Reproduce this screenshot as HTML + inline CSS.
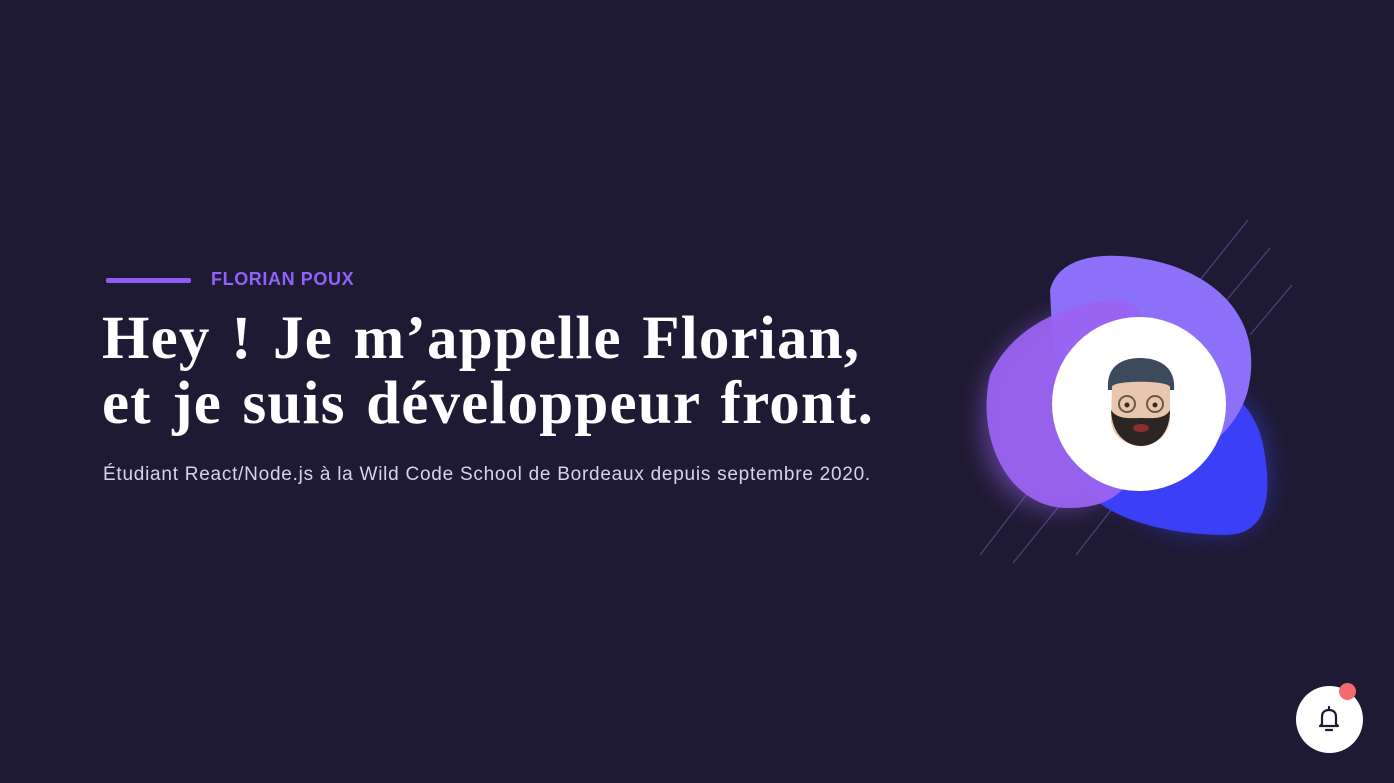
<!DOCTYPE html>
<html><head><meta charset="utf-8"><style>
html,body{margin:0;padding:0}
body{width:1394px;height:783px;background:#1f1a33;position:relative;overflow:hidden;font-family:"Liberation Sans",sans-serif}
.bar{position:absolute;left:106px;top:278px;width:85px;height:5px;background:#8f5cf7;border-radius:2px}
.name{position:absolute;left:211px;top:269px;font-size:18px;font-weight:bold;color:#9062f7;letter-spacing:0.6px}
h1{position:absolute;left:102px;top:306px;margin:0;font-family:"Liberation Serif",serif;font-weight:bold;font-size:61px;line-height:65px;color:#fff;letter-spacing:1.2px;word-spacing:4px}
.sub{position:absolute;left:103px;top:464px;font-size:19px;color:#d8d2f0;letter-spacing:0.75px}
.bell{position:absolute;left:1296px;top:686px;width:67px;height:67px;border-radius:50%;background:#fff}
.dot{position:absolute;left:1339px;top:683px;width:17px;height:17px;border-radius:50%;background:#f06a6f}
</style></head><body>
<div class="bar"></div>
<div class="name">FLORIAN POUX</div>
<h1>Hey ! Je m’appelle Florian,<br>et je suis développeur front.</h1>
<div class="sub">Étudiant React/Node.js à la Wild Code School de Bordeaux depuis septembre 2020.</div>
<svg style="position:absolute;left:0;top:0" width="1394" height="783">
<defs><filter id="g" x="-30%" y="-30%" width="160%" height="160%"><feGaussianBlur stdDeviation="12"/></filter></defs>
<g stroke="#4a4480" stroke-width="1.2">
<line x1="1200" y1="280" x2="1248" y2="220"/>
<line x1="1225" y1="302" x2="1270" y2="248"/>
<line x1="1250" y1="335" x2="1292" y2="285"/>
<line x1="980" y1="555" x2="1030" y2="490"/>
<line x1="1013" y1="563" x2="1060" y2="505"/>
<line x1="1076" y1="555" x2="1115" y2="505"/>
</g>
<g filter="url(#g)" opacity="0.5">
<path d="M1100 400 C1200 370 1265 380 1268 470 C1270 530 1240 540 1180 530 C1120 520 1080 470 1100 400Z" fill="#3b3ff5"/>
<path d="M990 380 C1020 310 1120 290 1145 330 C1170 390 1140 500 1070 508 C990 515 970 440 990 380Z" fill="#9a63f0"/>
</g>
<path d="M1090 400 C1150 370 1240 360 1262 440 C1275 500 1265 535 1225 535 C1170 535 1110 520 1085 490 C1065 460 1070 420 1090 400Z" fill="#3b3ff5"/>
<path d="M1050 290 C1060 250 1120 250 1170 265 C1230 285 1262 330 1248 390 C1235 440 1180 470 1130 480 C1080 490 1055 420 1050 290Z" fill="#8c70fa"/>
<path d="M990 375 C1015 320 1080 300 1120 300 C1160 305 1150 380 1145 430 C1140 490 1110 508 1070 508 C1010 510 975 440 990 375Z" fill="#9a63f0" opacity="0.95"/>
<circle cx="1139" cy="404" r="87" fill="#fff"/>
<path d="M1108 390 C1106 366 1122 358 1140 358 C1158 358 1176 366 1174 390Z" fill="#3d4a5c"/>
<path d="M1112 387 C1112 380 1168 380 1170 387 L1170 420 C1168 438 1152 446 1141 446 C1128 446 1112 438 1111 420Z" fill="#e9c6ae"/>
<path d="M1111 410 C1112 436 1128 446 1141 446 C1154 446 1170 436 1170 410 C1165 420 1150 418 1141 418 C1132 418 1117 420 1111 410Z" fill="#2b2523"/>
<ellipse cx="1141" cy="428" rx="8" ry="4" fill="#8a3030"/>
<circle cx="1127" cy="404" r="8" fill="none" stroke="#6b5a48" stroke-width="2"/>
<circle cx="1155" cy="404" r="8" fill="none" stroke="#6b5a48" stroke-width="2"/>
<circle cx="1127" cy="405" r="2.5" fill="#3a2a20"/>
<circle cx="1155" cy="405" r="2.5" fill="#3a2a20"/>
</svg>
<div class="bell"></div>
<div class="dot"></div>
<svg style="position:absolute;left:1316px;top:704px" width="26" height="30" viewBox="0 0 26 30">
<path d="M13 3 V5 M6 20 V13 C6 8 9 6 13 6 C17 6 20 8 20 13 V20 L22 22 H4 L6 20Z M10 26 H16" fill="none" stroke="#1f1a33" stroke-width="2.2" stroke-linejoin="round" stroke-linecap="round"/>
</svg>
</body></html>
